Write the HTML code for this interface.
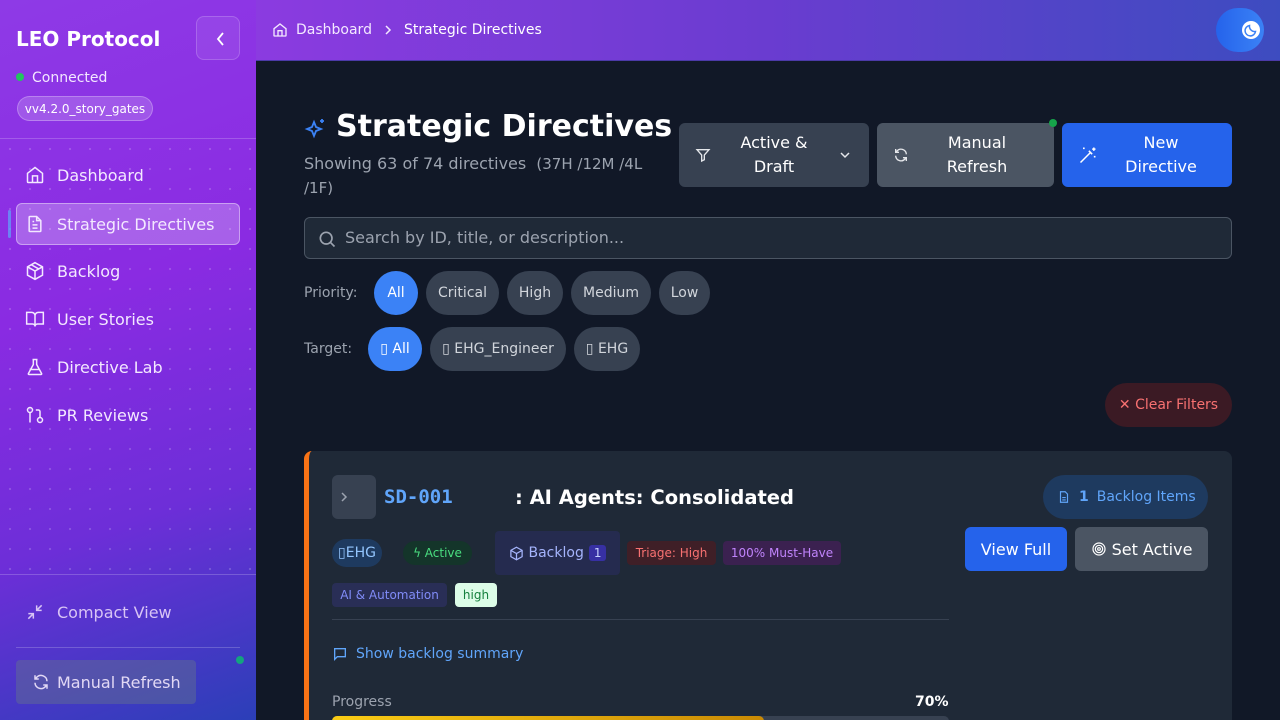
<!DOCTYPE html>
<html style="width:1280px;height:720px;overflow:hidden"><head><meta charset="utf-8"><style>
*{box-sizing:border-box;margin:0;padding:0}
body{width:1280px;height:720px;overflow:hidden;font-family:"DejaVu Sans","Liberation Sans",sans-serif;background:#111827;color:#e5e7eb;position:relative}
.side{position:absolute;left:0;top:0;width:256px;height:720px;background:linear-gradient(160deg,#8e3ae6 0%,#8a2be2 40%,#6d2ed8 70%,#2b3fb8 100%);}
.dots{background-image:radial-gradient(rgba(255,255,255,.18) 1px,transparent 1.3px);background-size:20px 20px}
.hdr{position:absolute;left:256px;top:0;width:1024px;height:61px;background:linear-gradient(90deg,#8b3be0,#6a3cd0 50%,#3d4cc0);border-bottom:1px solid #4c3aa8}
.abs{position:absolute}
.nav{position:absolute;left:16px;width:224px;height:42px;display:flex;align-items:center;padding-left:9px;font-size:16px;color:#f3e8ff;gap:12px}
.nav svg{width:20px;height:20px;stroke:#f3e8ff;fill:none;stroke-width:1.8}
.btn{position:absolute;border-radius:6px;display:flex;align-items:center;font-size:16px;color:#fff}
.pill{position:absolute;height:44px;border-radius:22px;background:#374151;color:#d1d5db;font-size:14px;display:flex;align-items:center;justify-content:center}
.tag{position:absolute;height:24px;border-radius:4px;font-size:12px;display:flex;align-items:center;justify-content:center}
</style></head><body>
<div class="side">
  <div class="abs dots" style="left:0;top:139px;width:256px;height:435px"></div>
  <div class="abs" style="left:16px;top:27px;font-size:20px;font-weight:bold;color:#fff">LEO Protocol</div>
  <div class="abs" style="left:196px;top:16px;width:44px;height:44px;border-radius:8px;background:rgba(255,255,255,.08);border:1px solid rgba(255,255,255,.18)"><svg width="44" height="44" viewBox="0 0 44 44"><path d="M31 16l-5 6 5 6" transform="translate(-5 0)" stroke="#fff" stroke-width="1.8" fill="none"/></svg></div>
  <div class="abs" style="left:16px;top:73px;width:8px;height:8px;border-radius:50%;background:#22c55e"></div>
  <div class="abs" style="left:32px;top:70px;font-size:14px;color:#f3e8ff">Connected</div>
  <div class="abs" style="left:17px;top:96px;width:136px;height:25px;border-radius:13px;background:rgba(255,255,255,.18);border:1px solid rgba(255,255,255,.25);font-size:12px;color:#fff;display:flex;align-items:center;justify-content:center">vv4.2.0_story_gates</div>
  <div class="abs" style="left:0;top:138px;width:256px;height:1px;background:rgba(255,255,255,.2)"></div>
  <div class="nav" style="top:154px"><svg viewBox="0 0 24 24"><path d="M3 10l9-7 9 7v10a1 1 0 0 1-1 1H4a1 1 0 0 1-1-1z M9 21v-8h6v8"/></svg>Dashboard</div>
  <div class="nav" style="top:203px;background:rgba(255,255,255,.25);border:1px solid rgba(255,255,255,.4);border-radius:6px;padding-left:8px"><svg viewBox="0 0 24 24"><path d="M14 3H6a1 1 0 0 0-1 1v16a1 1 0 0 0 1 1h12a1 1 0 0 0 1-1V8z M14 3v5h5 M9 13h6 M9 17h6 M9 9h2"/></svg>Strategic Directives</div>
  <div class="abs" style="left:8px;top:210px;width:3px;height:28px;background:#60a5fa;border-radius:2px;opacity:.7"></div>
  <div class="nav" style="top:250px"><svg viewBox="0 0 24 24"><path d="M12 2l9 5v10l-9 5-9-5V7z M3 7l9 5 9-5 M12 12v10 M7.5 4.5l9 5"/></svg>Backlog</div>
  <div class="nav" style="top:298px"><svg viewBox="0 0 24 24"><path d="M2 4h6a4 4 0 0 1 4 4v13a3 3 0 0 0-3-3H2z M22 4h-6a4 4 0 0 0-4 4v13a3 3 0 0 1 3-3h7z"/></svg>User Stories</div>
  <div class="nav" style="top:346px"><svg viewBox="0 0 24 24"><path d="M9 3h6 M10 3v6L4 20a1 1 0 0 0 1 1h14a1 1 0 0 0 1-1L14 9V3 M7 15h10"/></svg>Directive Lab</div>
  <div class="nav" style="top:394px"><svg viewBox="0 0 24 24"><circle cx="6" cy="6" r="3"/><circle cx="18" cy="18" r="3"/><path d="M6 9v12 M13 6h3a2 2 0 0 1 2 2v7"/></svg>PR Reviews</div>
  <div class="abs" style="left:0;top:574px;width:256px;height:1px;background:rgba(255,255,255,.2)"></div>
  <div class="nav" style="top:591px;color:#d8c4f5"><svg viewBox="0 0 24 24" style="stroke:#d8c4f5"><path d="M4 20l6-6 M4 14h6v6 M20 4l-6 6 M20 10h-6V4"/></svg>Compact View</div>
  <div class="abs" style="left:16px;top:647px;width:224px;height:1px;background:rgba(255,255,255,.2)"></div>
  <div class="abs" style="left:16px;top:660px;width:180px;height:44px;border-radius:4px;background:rgba(100,116,139,.45);display:flex;align-items:center;padding-left:16px;gap:7px;font-size:16px;color:#e2d8f5"><svg width="18" height="18" viewBox="0 0 24 24" fill="none" stroke="#e2d8f5" stroke-width="2"><path d="M20 11a8 8 0 0 0-14-5L4 8 M4 3v5h5 M4 13a8 8 0 0 0 14 5l2-2 M20 21v-5h-5"/></svg>Manual Refresh</div>
  <div class="abs" style="left:236px;top:656px;width:8px;height:8px;border-radius:50%;background:#14a37f"></div>
</div>
<div class="hdr dots">
  <svg class="abs" style="left:16px;top:22px" width="16" height="16" viewBox="0 0 24 24" fill="none" stroke="#f3e8ff" stroke-width="2"><path d="M3 10l9-7 9 7v10a1 1 0 0 1-1 1H4a1 1 0 0 1-1-1z M9 21v-8h6v8"/></svg>
  <div class="abs" style="left:40px;top:22px;font-size:14px;color:#f3e8ff">Dashboard</div>
  <svg class="abs" style="left:126px;top:24px" width="12" height="12" viewBox="0 0 12 12" fill="none" stroke="#f3e8ff" stroke-width="1.5"><path d="M4 2l4 4-4 4"/></svg>
  <div class="abs" style="left:148px;top:22px;font-size:14px;color:#fff">Strategic Directives</div>
  <div class="abs" style="left:960px;top:8px;width:48px;height:44px;border-radius:22px;background:linear-gradient(90deg,#2563eb,#3b82f6)"></div>
  <div class="abs" style="left:986px;top:21px;width:18px;height:18px;border-radius:50%;background:#fff"><svg width="18" height="18" viewBox="0 0 24 24" fill="none" stroke="#3b82f6" stroke-width="2"><path d="M18 14a7 7 0 0 1-8-8 7 7 0 1 0 8 8z"/></svg></div>
</div>
<svg class="abs" style="left:304px;top:116px" width="24" height="24" viewBox="0 0 24 24" fill="none" stroke="#3b82f6" stroke-width="1.8"><path d="M10 6l2 5 5 2-5 2-2 5-2-5-5-2 5-2z M18 3v4 M16 5h4"/></svg>
<div class="abs" style="left:336px;top:109px;font-size:30px;font-weight:bold;color:#fff">Strategic Directives</div>
<div class="abs" style="left:304px;top:152px;font-size:16px;color:#9ca3af;line-height:24px;width:360px">Showing 63 of 74 directives&nbsp; <span style="font-size:15px">(37H /12M /4L /1F)</span></div>
<div class="btn" style="left:679px;top:123px;width:190px;height:64px;background:#374151"><svg class="abs" style="left:16px;top:24px" width="16" height="16" viewBox="0 0 24 24" fill="none" stroke="#e5e7eb" stroke-width="2"><path d="M3 4h18l-7 8v7l-4 2v-9z"/></svg><div class="abs" style="left:50px;width:90px;text-align:center;line-height:24px">Active &amp; Draft</div><svg class="abs" style="left:160px;top:27px" width="12" height="10" viewBox="0 0 12 10" fill="none" stroke="#e5e7eb" stroke-width="1.5"><path d="M2 3l4 4 4-4"/></svg></div>
<div class="btn" style="left:877px;top:123px;width:177px;height:64px;background:#4b5563"><svg class="abs" style="left:16px;top:24px" width="16" height="16" viewBox="0 0 24 24" fill="none" stroke="#e5e7eb" stroke-width="2"><path d="M20 11a8 8 0 0 0-14-5L4 8 M4 3v5h5 M4 13a8 8 0 0 0 14 5l2-2 M20 21v-5h-5"/></svg><div class="abs" style="left:50px;width:100px;text-align:center;line-height:24px">Manual Refresh</div></div>
<div class="abs" style="left:1049px;top:119px;width:8px;height:8px;border-radius:50%;background:#16a34a"></div>
<div class="btn" style="left:1062px;top:123px;width:170px;height:64px;background:#2563eb"><svg class="abs" style="left:16px;top:22px" width="20" height="20" viewBox="0 0 24 24" fill="none" stroke="#fff" stroke-width="1.8"><path d="M3 21l12-12 M13 7l4 4 M15 9l-12 12 M19 3v4 M17 5h4 M7 3v2 M6 4h2 M20 13v2 M19 14h2"/></svg><div class="abs" style="left:46px;width:106px;text-align:center;line-height:24px">New Directive</div></div>
<div class="abs" style="left:304px;top:217px;width:928px;height:42px;border:1px solid #4b5563;border-radius:6px;background:#1f2937"><svg class="abs" style="left:12px;top:11px" width="20" height="20" viewBox="0 0 24 24" fill="none" stroke="#9ca3af" stroke-width="2"><circle cx="11" cy="11" r="7"/><path d="M16 16l5 5"/></svg><div class="abs" style="left:40px;top:10px;font-size:16px;color:#9ca3af">Search by ID, title, or description...</div></div>
<div class="abs" style="left:304px;top:285px;font-size:14px;color:#9ca3af">Priority:</div>
<div class="pill" style="left:374px;top:271px;width:44px;background:#3b82f6;color:#fff">All</div>
<div class="pill" style="left:426px;top:271px;width:73px">Critical</div>
<div class="pill" style="left:507px;top:271px;width:56px">High</div>
<div class="pill" style="left:571px;top:271px;width:80px">Medium</div>
<div class="pill" style="left:659px;top:271px;width:51px">Low</div>
<div class="abs" style="left:304px;top:341px;font-size:14px;color:#9ca3af">Target:</div>
<div class="pill" style="left:368px;top:327px;width:54px;background:#3b82f6;color:#fff">▯ All</div>
<div class="pill" style="left:430px;top:327px;width:136px">▯ EHG_Engineer</div>
<div class="pill" style="left:574px;top:327px;width:66px">▯ EHG</div>
<div class="pill" style="left:1105px;top:383px;width:127px;background:#3b1a24;color:#f87171">✕ Clear Filters</div>
<div class="abs" style="left:304px;top:451px;width:928px;height:269px;background:#1f2937;border-radius:8px 8px 0 0;border-left:5px solid #f97316"></div>
<div class="abs" style="left:332px;top:475px;width:44px;height:44px;border-radius:6px;background:#374151"><svg class="abs" style="left:6px;top:16px" width="12" height="12" viewBox="0 0 12 12" fill="none" stroke="#9ca3af" stroke-width="1.5"><path d="M4 2l4 4-4 4"/></svg></div>
<div class="abs" style="left:384px;top:486px;font-family:'DejaVu Sans Mono',monospace;font-size:19px;font-weight:bold;color:#60a5fa">SD-001</div>
<div class="abs" style="left:515px;top:486px;font-size:19.5px;font-weight:bold;color:#fff">: AI Agents: Consolidated</div>
<div class="abs" style="left:1043px;top:475px;width:165px;height:44px;border-radius:22px;background:#1e3a5f;display:flex;align-items:center;padding-left:14px;gap:8px;font-size:14px;color:#60a5fa"><svg width="14" height="16" viewBox="0 0 24 24" fill="none" stroke="#60a5fa" stroke-width="2"><path d="M14 3H6v18h12V7z M9 13h6 M9 17h6"/></svg><b>1</b> Backlog Items</div>
<div class="btn" style="left:965px;top:527px;width:102px;height:44px;background:#2563eb;justify-content:center">View Full</div>
<div class="btn" style="left:1075px;top:527px;width:133px;height:44px;background:#4b5563;justify-content:center;gap:5px"><svg width="16" height="16" viewBox="0 0 24 24" fill="none" stroke="#fff" stroke-width="1.8"><circle cx="12" cy="12" r="9"/><circle cx="12" cy="12" r="5.5"/><circle cx="12" cy="12" r="2"/></svg>Set Active</div>
<div class="tag" style="left:332px;top:539px;width:50px;height:28px;border-radius:14px;background:#1e3a5f;color:#93c5fd;font-size:14px">▯EHG</div>
<div class="tag" style="left:403px;top:541px;width:69px;border-radius:12px;background:#14352a;color:#4ade80">ϟ Active</div>
<div class="tag" style="left:495px;top:531px;width:125px;height:44px;background:#252b4f;color:#a5b4fc;font-size:14px;gap:5px"><svg width="15" height="15" viewBox="0 0 24 24" fill="none" stroke="#a5b4fc" stroke-width="2"><path d="M12 2l9 5v10l-9 5-9-5V7z M3 7l9 5 9-5 M12 12v10"/></svg>Backlog <span style="background:#3730a3;color:#c7d2fe;padding:1px 5px;border-radius:3px;font-size:12px">1</span></div>
<div class="tag" style="left:627px;top:541px;width:89px;background:#3f1f27;color:#f87171">Triage: High</div>
<div class="tag" style="left:723px;top:541px;width:118px;background:#3b2150;color:#c084fc">100% Must-Have</div>
<div class="tag" style="left:332px;top:583px;width:115px;background:#292e56;color:#818cf8">AI &amp; Automation</div>
<div class="tag" style="left:455px;top:583px;width:42px;background:#dcfce7;color:#15803d">high</div>
<div class="abs" style="left:332px;top:619px;width:617px;height:1px;background:#374151"></div>
<svg class="abs" style="left:332px;top:646px" width="16" height="16" viewBox="0 0 24 24" fill="none" stroke="#60a5fa" stroke-width="2"><path d="M4 4h16v12H8l-4 4z"/></svg>
<div class="abs" style="left:356px;top:646px;font-size:14px;color:#60a5fa">Show backlog summary</div>
<div class="abs" style="left:332px;top:694px;font-size:14px;color:#9ca3af">Progress</div>
<div class="abs" style="left:915px;top:694px;font-size:14px;font-weight:bold;color:#fff">70%</div>
<div class="abs" style="left:332px;top:716px;width:617px;height:4px;overflow:hidden"><div style="width:617px;height:10px;border-radius:5px;background:#374151"><div style="width:432px;height:10px;border-radius:5px;background:linear-gradient(90deg,#facc15,#ca8a04)"></div></div></div>
</body></html>
